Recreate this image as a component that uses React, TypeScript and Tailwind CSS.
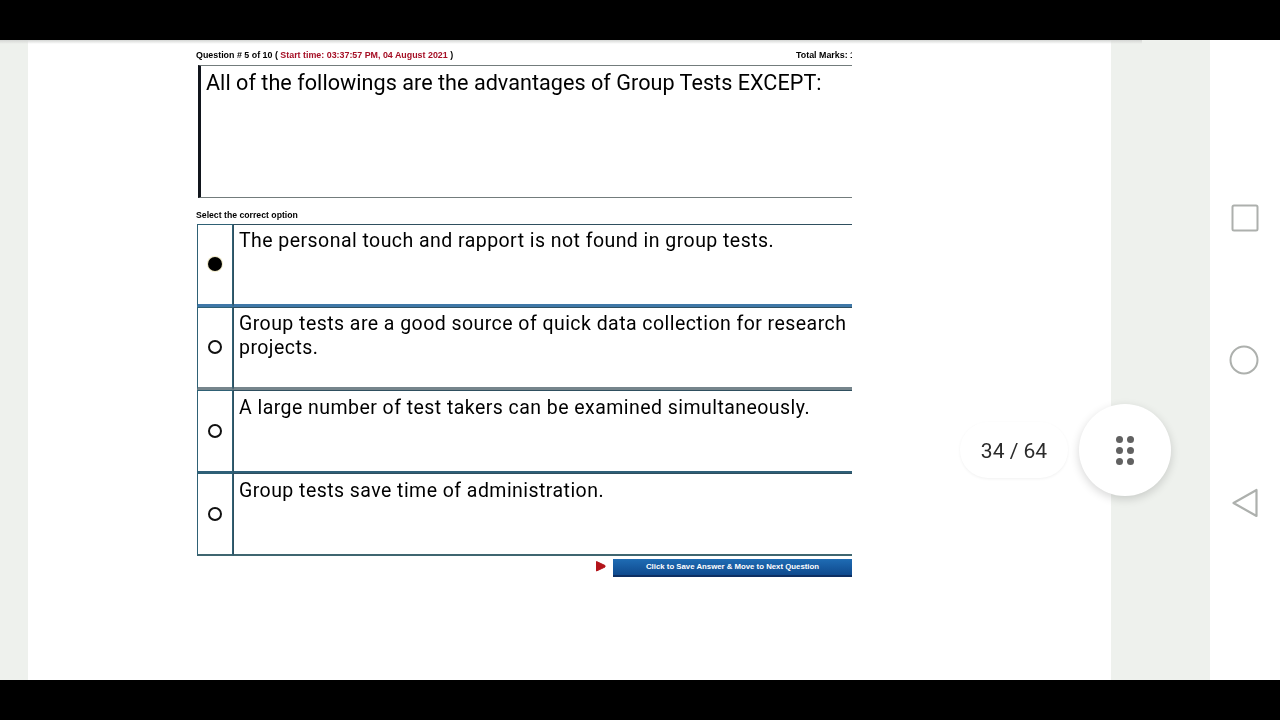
import { Fragment } from "react";

const options = [
  { text: <>The personal touch and rapport is not found in group tests.</>, selected: true, rule: "border-b-[3px] border-b-[#3f78a8]", top: "pt-[4px]" },
  { text: <>Group tests are a good source of quick data collection for research<br />projects.</>, selected: false, rule: "border-b-[3px] border-b-[#76858c]", top: "pt-[4px]" },
  { text: <>A large number of test takers can be examined simultaneously.</>, selected: false, rule: "border-b-[2px] border-b-[#2f5f78]", top: "pt-[4.5px]" },
  { text: <>Group tests save time of administration.</>, selected: false, rule: "border-b-[2px] border-b-[#3f6670]", top: "pt-[4.5px]" },
];

export default function App() {
  return (
    <div className="flex h-[720px] w-[1280px] flex-col overflow-hidden bg-black font-['Roboto',sans-serif] text-black">
      <div className="h-10 shrink-0 bg-black" />

      <div className="relative flex h-[640px] bg-white">
        {/* shadow under the top bar */}
        <div className="absolute left-0 top-0 h-[4px] w-[1142px] bg-gradient-to-b from-[#d4d6d4] to-transparent" />

        <div className="w-[28px] shrink-0 bg-[#eef1ed]" />

        {/* Question page */}
        <main className="w-[1083px] shrink-0 pl-[168px] pt-[10px] blur-[0.3px]">
          <div className="w-[656px]">
            <div className="flex h-[11px] items-center justify-between font-['Liberation_Sans',sans-serif] text-[8.9px] font-bold leading-[11px]">
              <p>
                Question # 5 of 10 ({" "}
                <span className="text-[#a50f25]">Start time: 03:37:57 PM, 04 August 2021</span> )
              </p>
              <p className="w-[56px] overflow-hidden whitespace-nowrap">Total Marks: 1</p>
            </div>

            <div className="ml-[2px] mt-[4px] h-[133px] border-y-[1.5px] border-l-[3px] border-y-[#737c7c] border-l-[#11151c] pl-[5px] pt-[3px] text-[21.6px] tracking-[0.03px] leading-[28px]">
              All of the followings are the advantages of Group Tests EXCEPT:
            </div>

            <p className="mt-[12px] h-[11px] font-['Liberation_Sans',sans-serif] text-[8.7px] font-bold leading-[11px]">
              Select the correct option
            </p>

            <div className="ml-[1px] mt-[3px] grid grid-cols-[36px_619px]">
              {options.map((o, i) => (
                <Fragment key={i}>
                  <div className={`flex h-[83px] items-center justify-center border-x border-t border-[#2f6175] pb-[1px] ${o.rule}`}>
                    {o.selected ? (
                      <span className="h-[14px] w-[14px] rounded-full bg-black shadow-[0_0_0_1px_#efe9c8]" />
                    ) : (
                      <span className="h-[14px] w-[14px] rounded-full border-2 border-[#111]" />
                    )}
                  </div>
                  <div className={`h-[83px] border-l border-t border-[#2f4f5f] pl-[5px] text-[19.5px] tracking-[0.45px] leading-[24px] ${o.top} ${o.rule}`}>
                    {o.text}
                  </div>
                </Fragment>
              ))}
            </div>

            <div className="mt-[3px] flex items-center justify-end">
              <svg className="mr-[7px] mt-[-4px]" width="11" height="11" viewBox="0 0 11 11">
                <path d="M1.5 0.5 L10 4.5 L10 6 L1.5 10 Z" fill="#b3141a" stroke="#b3141a" strokeLinejoin="round" />
              </svg>
              <button className="h-[18px] w-[239px] border-b-2 border-[#0d2f63] bg-gradient-to-b from-[#1f6cb4] to-[#0f4a8e] font-['Liberation_Sans',sans-serif] text-[7.8px] font-bold leading-[16px] text-white">
                Click to Save Answer &amp; Move to Next Question
              </button>
            </div>
          </div>
        </main>

        <div className="w-[99px] shrink-0 bg-[#eef1ed]" />

        {/* Navigation keys */}
        <div className="flex w-[70px] shrink-0 flex-col items-center justify-center gap-[113px] pt-[2px]">
          <svg className="ml-[-1px]" width="28" height="28" viewBox="0 0 28 28">
            <rect x="1.5" y="1.5" width="25" height="25" rx="1.5" fill="none" stroke="#adb0ad" strokeWidth="2" />
          </svg>
          <svg className="ml-[-2px]" width="30" height="30" viewBox="0 0 30 30">
            <circle cx="15" cy="15" r="13.5" fill="none" stroke="#adb0ad" strokeWidth="2" />
          </svg>
          <svg className="ml-[-1px]" width="28" height="30" viewBox="0 0 28 30">
            <path d="M25.5 2 V28 L2.5 15 Z" fill="none" stroke="#adb0ad" strokeWidth="2.2" strokeLinejoin="round" />
          </svg>
        </div>

        {/* Page counter */}
        <div className="absolute left-[960px] top-[382px] flex h-[56px] w-[108px] items-center justify-center rounded-full bg-white pt-[4px] text-[21px] text-[#2b2b2b] shadow-[0_1px_3px_rgba(0,0,0,0.06)]">
          34 / 64
        </div>

        {/* Floating menu button */}
        <div className="absolute left-[1079px] top-[364px] flex h-[92px] w-[92px] items-center justify-center rounded-full bg-white shadow-[0_3px_10px_rgba(0,0,0,0.16)]">
          <div className="grid grid-cols-2 gap-x-[4px] gap-y-[4px]">
            {[0, 1, 2, 3, 4, 5].map((d) => (
              <span key={d} className="h-[7px] w-[7px] rounded-full bg-[#616161]" />
            ))}
          </div>
        </div>
      </div>

      <div className="h-10 shrink-0 bg-black" />
    </div>
  );
}
